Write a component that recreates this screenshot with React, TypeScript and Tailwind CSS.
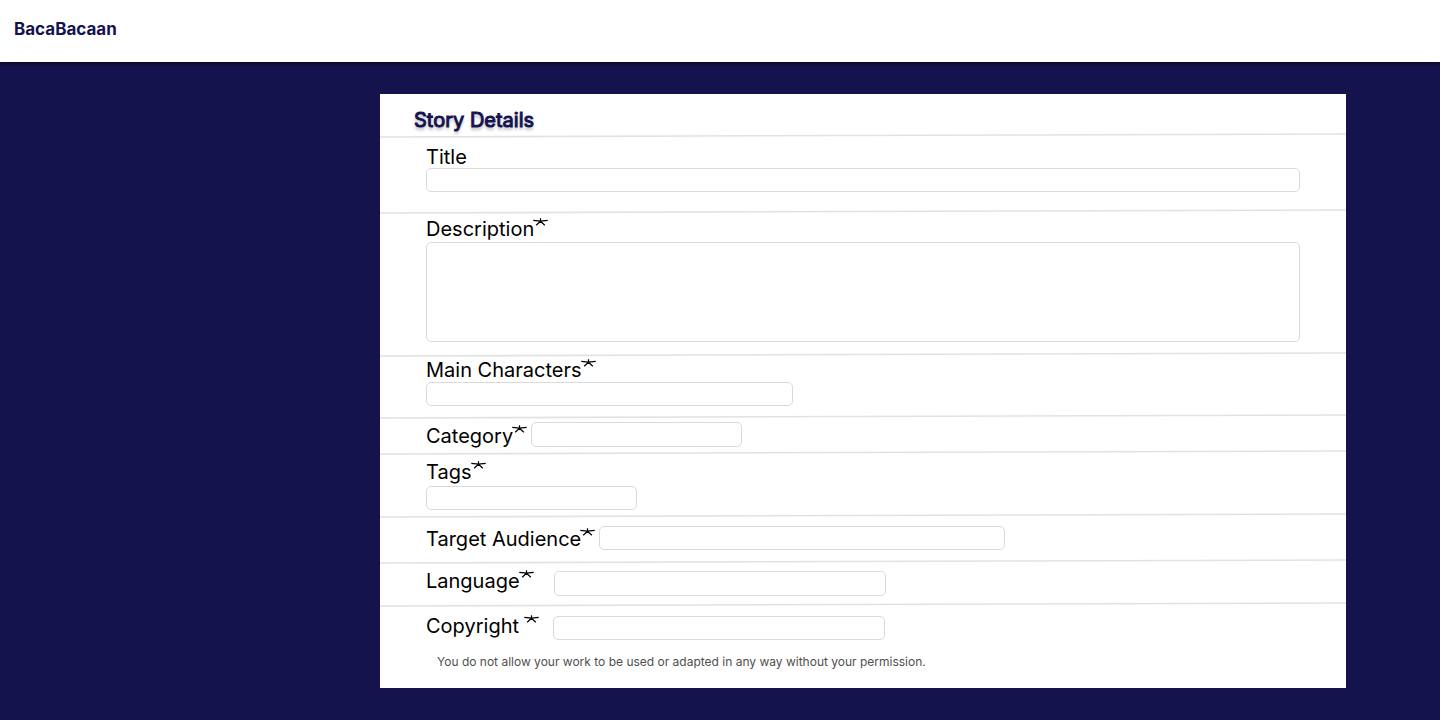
import type { ReactNode } from "react";

function Divider() {
  return (
    <svg
      className="block h-[5px] w-full"
      viewBox="0 0 966 5"
      preserveAspectRatio="none"
      aria-hidden="true"
    >
      <line x1="0" y1="4" x2="966" y2="1" stroke="#e2e2e2" strokeWidth="1.6" />
    </svg>
  );
}

function RequiredMark() {
  return (
    <svg className="-mt-px -ml-px h-2 w-[15px] shrink-0" viewBox="0 0 15 8" aria-hidden="true">
      <path
        d="M7.5 3.2V0.2M7.5 3.2L0.3 2.4M7.5 3.2L14.7 2.4M7.5 3.2L3.2 7.2M7.5 3.2L11.8 7.2"
        fill="none"
        stroke="#000"
        strokeWidth="1.2"
      />
    </svg>
  );
}

function FieldLabel({
  htmlFor,
  required = false,
  children,
}: {
  htmlFor: string;
  required?: boolean;
  children: ReactNode;
}) {
  return (
    <label
      htmlFor={htmlFor}
      className="flex w-fit shrink-0 items-start text-xl leading-5 whitespace-pre text-black"
    >
      {children}
      {required && <RequiredMark />}
    </label>
  );
}

const box = "block max-w-full rounded-[5px] border border-[#dadada] bg-white px-2 text-sm text-black";

export default function App() {
  return (
    <div className="min-h-screen bg-[#15134e] font-['Inter',sans-serif]">
      <header className="relative flex h-[62px] items-center bg-white px-3.5 pb-1 shadow-[0_2px_4px_rgba(0,0,0,0.6)]">
        <a href="#" className="text-[17px] leading-6 font-bold text-[#15134e]">
          BacaBacaan
        </a>
      </header>

      <main className="pt-8 pr-[94px] pb-8 pl-[380px]">
        <form className="bg-white">
          <h1 className="h-[39px] pt-4 pl-[34px] text-xl leading-5 font-normal text-[#15134e] [-webkit-text-stroke:1px_#15134e] [text-shadow:0_3px_3px_rgba(0,0,0,0.3)]">
            Story Details
          </h1>
          <Divider />

          <div className="px-[46px] pt-[9px] pb-[17px]">
            <FieldLabel htmlFor="title">Title</FieldLabel>
            <input id="title" type="text" className={`${box} mt-px h-6 w-full`} />
          </div>
          <Divider />

          <div className="px-[46px] pt-[5px] pb-2.5">
            <FieldLabel htmlFor="description" required>
              Description
            </FieldLabel>
            <textarea
              id="description"
              className={`${box} mt-[3px] h-[100px] w-full resize-none`}
            />
          </div>
          <Divider />

          <div className="px-[46px] pt-[3px] pb-2">
            <FieldLabel htmlFor="characters" required>
              Main Characters
            </FieldLabel>
            <input id="characters" type="text" className={`${box} mt-0.5 h-6 w-[367px]`} />
          </div>
          <Divider />

          <div className="flex items-start px-[46px] pt-[3px] pb-[3px]">
            <div className="pt-1">
              <FieldLabel htmlFor="category" required>
                Category
              </FieldLabel>
            </div>
            <input id="category" type="text" className={`${box} ml-1 h-[25px] w-[211px]`} />
          </div>
          <Divider />

          <div className="px-[46px] pt-[7px] pb-[3px]">
            <FieldLabel htmlFor="tags" required>
              Tags
            </FieldLabel>
            <input id="tags" type="text" className={`${box} mt-1 h-6 w-[211px]`} />
          </div>
          <Divider />

          <div className="flex items-start px-[46px] pt-2 pb-[9px]">
            <div className="pt-[3px]">
              <FieldLabel htmlFor="audience" required>
                Target Audience
              </FieldLabel>
            </div>
            <input id="audience" type="text" className={`${box} ml-1 h-6 w-[406px]`} />
          </div>
          <Divider />

          <div className="flex items-start px-[46px] pt-[7px] pb-[6px]">
            <FieldLabel htmlFor="language" required>
              Language
            </FieldLabel>
            <input id="language" type="text" className={`${box} ml-5 h-[25px] w-[332px]`} />
          </div>
          <Divider />

          <div className="px-[46px] pt-[9px] pb-[18px]">
            <div className="flex items-start">
              <FieldLabel htmlFor="copyright" required>
                {"Copyright "}
              </FieldLabel>
              <input id="copyright" type="text" className={`${box} ml-3.5 h-6 w-[332px]`} />
            </div>
            <p className="mt-3.5 pl-[11px] text-xs leading-4 text-[#4f4f4f]">
              You do not allow your work to be used or adapted in any way without your permission.
            </p>
          </div>
        </form>
      </main>
    </div>
  );
}
